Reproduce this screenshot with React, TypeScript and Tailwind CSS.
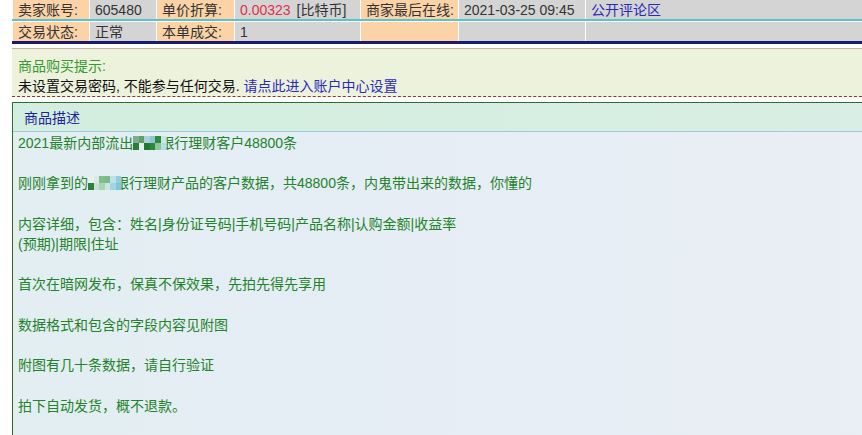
import React from 'react';

const orange = 'bg-[#fbd3a6]';
const gray = 'bg-[#d4d4d4]';

function Cell({ w, bg, children }: { w?: string; bg: string; children?: React.ReactNode }) {
  return (
    <div className={`${w ?? 'flex-1'} ${bg} border-l border-white px-[5px] flex items-center whitespace-nowrap`}>
      {children}
    </div>
  );
}

// little pixelated blocks hiding part of the bank name
function Mosaic({ colors, className }: { colors: string[]; className?: string }) {
  return (
    <span className={`inline-block w-[33px] h-[14px] align-top relative top-[3px] ${className ?? ''}`}>
      <span className="flex flex-wrap w-full h-full">
        {colors.map((c, i) => (
          <span key={i} className="block w-[5.5px] h-[7px]" style={{ backgroundColor: c }} />
        ))}
      </span>
    </span>
  );
}

const m1 = [
  '#7fae8a', '#5f9f6a', '#a8d2dc', '#8fc6d6', '#2f8a3f', '#c9e6e0',
  '#2e7d3a', '#e6f0ee', '#1f7a30', '#2a8a3a', '#8fc49a', '#b6dce6',
];
const m2 = [
  '#e6efee', '#d8e9e6', '#7fbf8a', '#7bb98a', '#bfe0e8', '#8fd0e0',
  '#2f7f3a', '#c7dfd6', '#a8d4b0', '#cde6dc', '#9fd6e6', '#7fc8dc',
];

export default function App() {
  return (
    <div className="w-[862px] h-[435px] overflow-hidden bg-white text-[14px] leading-[20px] font-['Liberation_Sans','Noto_Sans_CJK_SC',sans-serif]">
      {/* seller info table */}
      <div className="pl-[12px]">
        <div className="flex h-[21px] border-b-2 border-[#5cc2c9] text-[#333]">
          <Cell w="w-[77px]" bg={orange}>卖家账号:</Cell>
          <Cell w="w-[67px]" bg={gray}>605480</Cell>
          <Cell w="w-[78px]" bg={orange}>单价折算:</Cell>
          <Cell w="w-[126px]" bg={gray}>
            <span className="text-[#e0304a]">0.00323</span>
            <span className="ml-[6px]">[比特币]</span>
          </Cell>
          <Cell w="w-[98px]" bg={orange}>商家最后在线:</Cell>
          <Cell w="w-[127px]" bg={gray}>2021-03-25 09:45</Cell>
          <Cell bg={gray}>
            <span className="text-[#2a2ab8]">公开评论区</span>
          </Cell>
        </div>
        <div className="flex h-[22px] mt-px border-b-[3px] border-[#1b1b6b] text-[#333]">
          <Cell w="w-[77px]" bg={orange}>交易状态:</Cell>
          <Cell w="w-[67px]" bg={gray}>正常</Cell>
          <Cell w="w-[78px]" bg={orange}>本单成交:</Cell>
          <Cell w="w-[126px]" bg={gray}>1</Cell>
          <Cell w="w-[98px]" bg={orange} />
          <Cell w="w-[127px]" bg={gray} />
          <Cell bg={gray} />
        </div>
      </div>

      {/* purchase notice */}
      <div
        className="ml-[12px] mt-[4px] border-t border-[#bfb3a6] border-b border-b-[#8b3a2a] border-dashed bg-[#edf2dd] pt-[7px] pl-[6px]"
        style={{ borderTopStyle: 'solid' }}
      >
        <div className="text-[#35992f]">商品购买提示:</div>
        <div className="text-[#111]">
          未设置交易密码, 不能参与任何交易.{' '}
          <span className="text-[#2a2ab8]">请点此进入账户中心设置</span>
        </div>
      </div>

      {/* description */}
      <div className="ml-[12px] mt-[5px] border-t border-l border-[#2d6e2d] bg-gradient-to-r from-[#e2eef2] via-[#e6edf5] to-[#e9eff4]">
        <div className="h-[29px] flex items-center pl-[11px] pt-[2px] bg-gradient-to-r from-[#d2eede] to-[#d9eee4] border-b border-[#9fcbe0] text-[#22229a]">
          商品描述
        </div>
        <div className="pl-[5px] pt-px text-[#23832a] leading-[20.2px]">
          <div>
            2021最新内部流出<Mosaic colors={m1} className="mr-[-6px]" />银行理财客户48800条
          </div>
          <div>&nbsp;</div>
          <div>
            刚刚拿到的<Mosaic colors={m2} className="mr-[-6px]" />银行理财产品的客户数据，共48800条，内鬼带出来的数据，你懂的
          </div>
          <div>&nbsp;</div>
          <div>
            内容详细，包含：姓名|身份证号码|手机号码|产品名称|认购金额|收益率
            <br />
            (预期)|期限|住址
          </div>
          <div>&nbsp;</div>
          <div>首次在暗网发布，保真不保效果，先拍先得先享用</div>
          <div>&nbsp;</div>
          <div>数据格式和包含的字段内容见附图</div>
          <div>&nbsp;</div>
          <div>附图有几十条数据，请自行验证</div>
          <div>&nbsp;</div>
          <div>拍下自动发货，概不退款。</div>
          <div>&nbsp;</div>
        </div>
      </div>
    </div>
  );
}
